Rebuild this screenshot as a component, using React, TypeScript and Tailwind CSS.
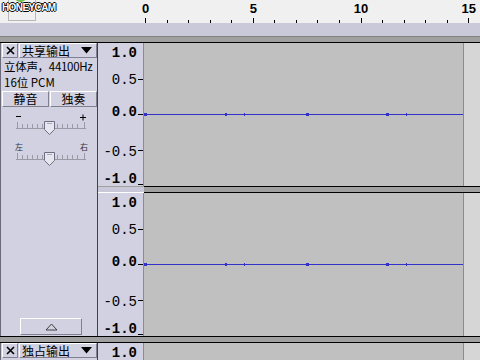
const SEC = 21.55;
const X0 = 145;

const cjk = "font-['Noto_Sans_CJK_SC',sans-serif]";

function Watermark() {
  return (
    <div className="pointer-events-none absolute left-0 top-0 h-[23px] w-[60px]">
      <div className="absolute left-[8px] top-0 h-[21px] w-[28px] border-b border-l border-r border-[#b8b8b8]" />
      <div className="absolute left-[15px] top-[-8px] h-[10px] w-[11px] rounded-full bg-[#6cc04a]" />
      <div className="absolute left-[40px] top-[3px] h-[5px] w-[6px] border-r border-t border-[#333]" />
      <span className="absolute left-[2px] top-[2px] font-['Liberation_Sans',sans-serif] text-[10px] font-bold leading-[11px] tracking-[-0.6px] text-white [text-shadow:1px_0_0_#000,-1px_0_0_#000,0_1px_0_#000,0_-1px_0_#000]">
        HONEYCAM
      </span>
    </div>
  );
}

function TimeRuler() {
  const ticks = Array.from({ length: 16 }, (_, i) => i);
  return (
    <div className="relative h-[23px] bg-[#f0f0f0]">
      <svg width="480" height="23" className="block">
        {ticks.map((i) => {
          const x = Math.round(X0 + i * SEC) + 0.5;
          const major = i % 5 === 0;
          return <line key={i} x1={x} x2={x} y1={major ? 18 : 20} y2={23} stroke="#000" />;
        })}
        {[0, 5, 10, 15].map((i) => (
          <text
            key={i}
            x={X0 + i * SEC + 0.5}
            y={13}
            textAnchor="middle"
            fontFamily="Liberation Sans, sans-serif"
            fontWeight="bold"
            fontSize="13"
          >
            {i}
          </text>
        ))}
      </svg>
      <Watermark />
    </div>
  );
}

// vertical amplitude ruler, one per channel
function AmpRuler({ full = true }: { full?: boolean }) {
  const labels = [
    { t: "1.0", y: 14, bold: true, tick: null as number | null },
    { t: "0.5", y: 41, bold: false, tick: 36 },
    { t: "0.0", y: 73, bold: true, tick: 71 },
    { t: "-0.5", y: 113, bold: false, tick: 107 },
    { t: "-1.0", y: 140, bold: true, tick: 141 },
  ];
  const shown = full ? labels : labels.slice(0, 1);
  return (
    <svg width="45" height="143" className="block">
      {shown.map((l) => (
        <g key={l.t}>
          <text
            x={39}
            y={l.y}
            textAnchor="end"
            fontFamily="Liberation Mono, monospace"
            fontSize="14"
            fontWeight={l.bold ? "bold" : "normal"}
            fill="#000"
          >
            {l.t}
          </text>
          {l.tick !== null && <line x1={40} x2={45} y1={l.tick + 0.5} y2={l.tick + 0.5} stroke="#000" />}
        </g>
      ))}
    </svg>
  );
}

function Wave() {
  const y = 71;
  return (
    <svg width="319" height="143" className="block">
      <line x1={0} x2={319} y1={y + 0.5} y2={y + 0.5} stroke="#3232c8" />
      {[1, 163, 243].map((x) => (
        <rect key={x} x={x - 1} y={y - 1} width={3} height={3} fill="#3232c8" />
      ))}
      <rect x={81} y={y - 1} width={2} height={3} fill="#3232c8" />
      {[100, 262].map((x) => (
        <rect key={x} x={x} y={y - 1} width={1} height={3} fill="#3232c8" />
      ))}
    </svg>
  );
}

function Channel() {
  return (
    <div className="flex h-[143px]">
      <div className="w-[46px] border-r border-[#8c8c8c] bg-[#d1d1e1]">
        <AmpRuler />
      </div>
      <div className="w-[320px] border-r border-[#8c8c8c] bg-[#c0c0c0]">
        <Wave />
      </div>
      <div className="flex-1 bg-[#d6d6d6]" />
    </div>
  );
}

function ChannelGap() {
  return (
    <div className="flex h-[7px]">
      <div className="flex w-[46px] flex-col">
        <div className="h-px bg-[#a0a0a0]" />
        <div className="flex-1 bg-[#c8c8d8]" />
        <div className="h-px bg-white" />
      </div>
      <div className="flex flex-1 flex-col">
        <div className="h-px bg-black" />
        <div className="flex-1 bg-[#a0a0a0]" />
        <div className="h-px bg-black" />
      </div>
    </div>
  );
}

function TrackGap({ top = "bg-black" }: { top?: string }) {
  return (
    <div className="flex h-[7px] flex-col">
      <div className={`h-px ${top}`} />
      <div className="flex-1 bg-[#a0a0a0]" />
      <div className="h-px bg-black" />
    </div>
  );
}

const bevel = "border border-t-white border-l-white border-b-[#808090] border-r-[#808090]";

function TitleBar({ name }: { name: string }) {
  return (
    <div className="flex h-[15px] gap-px pl-px">
      <div className={`flex w-[16px] items-center justify-center ${bevel}`}>
        <svg width="9" height="9" viewBox="0 0 9 9">
          <path d="M1 1 L8 8 M8 1 L1 8" stroke="#000" strokeWidth="1.6" />
        </svg>
      </div>
      <div className={`flex flex-1 items-center justify-between pl-[2px] pr-[4px] ${bevel}`}>
        <span className={`${cjk} whitespace-nowrap text-[12px] leading-[13px] text-black`}>{name}</span>
        <svg width="11" height="7" viewBox="0 0 11 7">
          <path d="M0 0 H11 L5.5 6.5 Z" fill="#000" />
        </svg>
      </div>
    </div>
  );
}

function Sliders() {
  const ticks = [16, 21, 26, 31, 36, 41, 46, 51, 56, 61, 66, 71, 76, 83];
  const slider = (y: number, tx: number) => (
    <g>
      <line x1={15} x2={85} y1={y + 0.5} y2={y + 0.5} stroke="#9a9aa6" />
      {ticks.map((x, i) => {
        const end = i === 0 || i === ticks.length - 1;
        return (
          <line key={x} x1={x + 0.5} x2={x + 0.5} y1={end ? y - 6 : y - 4} y2={y} stroke="#9a9aa6" />
        );
      })}
      <path
        d={`M${tx + 0.5} ${y - 6.5} h10 v8 l-5 5 l-5 -5 z`}
        fill="#e6e6f0"
        stroke="#6e6e80"
      />
      <line x1={tx + 3} x2={tx + 8} y1={y - 4.5} y2={y - 4.5} stroke="#a8a8b8" />
    </g>
  );
  return (
    <svg width="96" height="62" className="block">
      <line x1={15} x2={20} y1={8.5} y2={8.5} stroke="#000" />
      <line x1={79} x2={85} y1={9.5} y2={9.5} stroke="#000" />
      <line x1={82} x2={82} y1={6.5} y2={12.5} stroke="#000" />
      {slider(20, 43)}
      <text x={14} y={42} fontSize="8" fill="#303040" fontFamily="Noto Sans CJK SC, sans-serif">左</text>
      <text x={79} y={42} fontSize="8" fill="#303040" fontFamily="Noto Sans CJK SC, sans-serif">右</text>
      {slider(51, 43)}
    </svg>
  );
}

function StereoPanel() {
  return (
    <div className="flex h-[293px] w-[98px] flex-col border-l border-r border-l-[#6a6a7a] border-r-[#404048] bg-[#d1d1e1]">
      <TitleBar name="共享输出" />
      <div className={`${cjk} flex h-[33px] flex-col whitespace-nowrap pl-[3px] text-[11.5px] leading-[16px] text-black`}>
        <span className="block h-[16px] tracking-[-0.3px]">立体声，44100Hz</span>
        <span className="block h-[16px]">16位 PCM</span>
      </div>
      <div className="flex h-[16px] gap-px pl-px">
        <div className={`flex w-[47px] items-center justify-center ${bevel} ${cjk} text-[12px] leading-[14px]`}>
          静音
        </div>
        <div className={`flex flex-1 items-center justify-center ${bevel} ${cjk} text-[12px] leading-[14px]`}>
          独奏
        </div>
      </div>
      <div className="pt-[1px]">
        <Sliders />
      </div>
      <div className="flex-1" />
      <div className={`mb-px ml-[19px] flex h-[17px] w-[62px] items-center justify-center ${bevel}`}>
        <svg width="13" height="8" viewBox="0 0 13 8">
          <path d="M1 7 L6.5 1 L12 7 Z" fill="none" stroke="#404040" />
        </svg>
      </div>
    </div>
  );
}

export default function App() {
  return (
    <div className="h-[360px] w-[480px] overflow-hidden bg-[#c0c0c0]">
      <TimeRuler />
      <div className="h-[13px] bg-[#c9c9d9]" />
      <TrackGap top="bg-[#808080]" />
      <div className="flex">
        <StereoPanel />
        <div className="flex flex-1 flex-col">
          <Channel />
          <ChannelGap />
          <Channel />
        </div>
      </div>
      <TrackGap />
      <div className="flex">
        <div className="h-[143px] w-[98px] border-l border-r border-l-[#6a6a7a] border-r-[#404048] bg-[#d1d1e1]">
          <TitleBar name="独占输出" />
        </div>
        <div className="flex flex-1">
          <div className="w-[46px] border-r border-[#8c8c8c] bg-[#d1d1e1]">
            <AmpRuler full={false} />
          </div>
          <div className="w-[320px] border-r border-[#8c8c8c] bg-[#c0c0c0]" />
          <div className="flex-1 bg-[#d6d6d6]" />
        </div>
      </div>
    </div>
  );
}
